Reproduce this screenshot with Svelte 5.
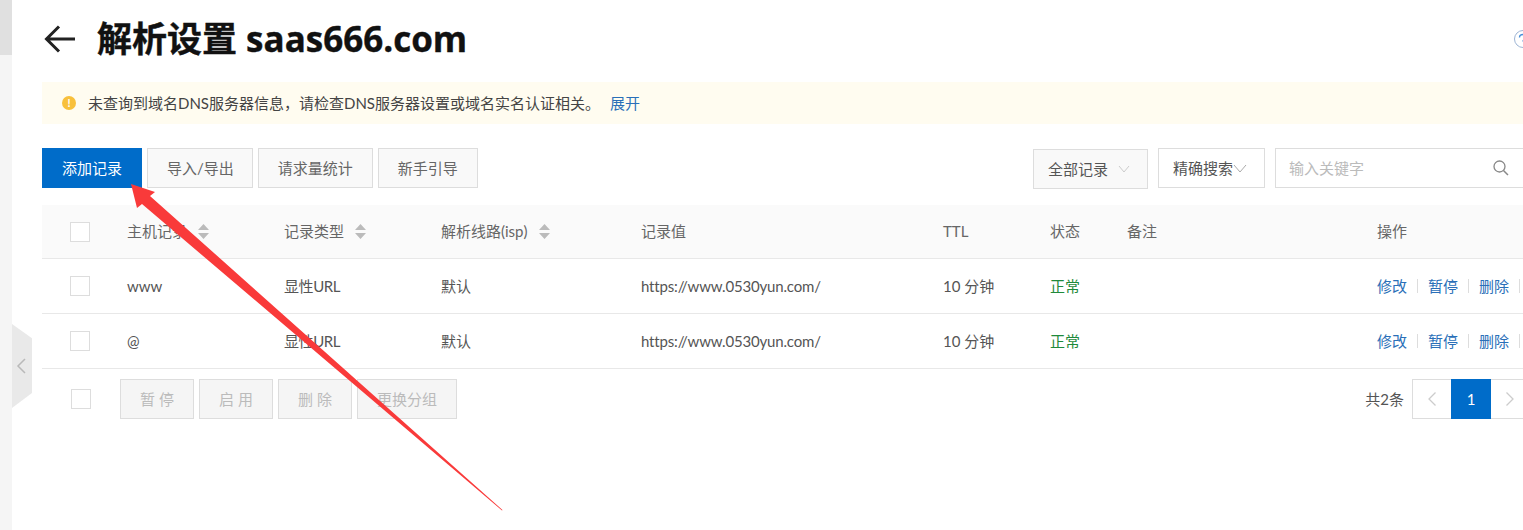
<script>
	const columns = [
		{ label: '主机记录', sort: true },
		{ label: '记录类型', sort: true },
		{ label: '解析线路(isp)', sort: true },
		{ label: '记录值' },
		{ label: 'TTL' },
		{ label: '状态' },
		{ label: '备注' },
		{ label: '操作' }
	]

	const records = [
		{ host: 'www', type: '显性URL', line: '默认', value: 'https://www.0530yun.com/', ttl: '10 分钟', status: '正常' },
		{ host: '@', type: '显性URL', line: '默认', value: 'https://www.0530yun.com/', ttl: '10 分钟', status: '正常' }
	]

	const tools = ['导入/导出', '请求量统计', '新手引导']
	const batch = ['暂 停', '启 用', '删 除', '更换分组']
</script>

<div class="page">
	<aside class="rail"><div class="rail-top"></div></aside>
	<div class="rail-handle">
		<svg width="10" height="16" viewBox="0 0 10 16"><path d="M9 1 2 8l7 7" fill="none" stroke="#b9b9b9" stroke-width="1.5" /></svg>
	</div>

	<main class="main">
		<div class="content">
			<header class="title-row">
				<svg class="back" width="32" height="28" viewBox="0 0 32 28">
					<path d="M15 1.500 2.500 14 15 26.500M3 14h28" fill="none" stroke="#222" stroke-width="3" />
				</svg>
				<h1>解析设置 saas666.com</h1>
				<svg class="help" width="18" height="18" viewBox="0 0 18 18">
					<circle cx="9" cy="9" r="8.500" fill="none" stroke="#9db4d4" />
					<path d="M5.500 7.500C5.500 5.500 7 4.500 9 4.500s3.500 1 3.500 2.800c0 2-3.500 2-3.500 4.200" fill="none" stroke="#4a90d9" stroke-width="1.400" />
				</svg>
			</header>

			<div class="alert">
				<span class="alert-icon">!</span>
				<span class="alert-text">未查询到域名DNS服务器信息，请检查DNS服务器设置或域名实名认证相关。</span>
				<span class="link expand">展开</span>
			</div>

			<div class="toolbar">
				<button class="btn primary">添加记录</button>
				{#each tools as tool}
					<button class="btn">{tool}</button>
				{/each}
				<div class="spacer"></div>
				<div class="select all">
					<span class="lift">全部记录</span>
					<svg width="12" height="8" viewBox="0 0 12 8"><path d="M1 1l5 6 5-6" fill="none" stroke="#ccc" /></svg>
				</div>
				<div class="select exact">
					<span class="lift">精确搜索</span>
					<svg width="14" height="9" viewBox="0 0 14 9"><path d="M1 1l6 7 6-7" fill="none" stroke="#aaa" /></svg>
				</div>
				<div class="search">
					<span class="lift">输入关键字</span>
					<svg width="18" height="18" viewBox="0 0 18 18">
						<circle cx="7.500" cy="7.500" r="5.500" fill="none" stroke="#888" stroke-width="1.300" />
						<path d="M11.500 11.500 16 16" stroke="#888" stroke-width="1.500" />
					</svg>
				</div>
			</div>

			<div class="row head">
				<span class="check"></span>
				{#each columns as col}
					<span class="cell">
						{col.label}
						{#if col.sort}
							<svg class="sort" width="11" height="15" viewBox="0 0 11 15">
								<path d="M5.500 0 11 6H0zM5.500 15 0 9h11z" fill="#bbb" />
							</svg>
						{/if}
					</span>
				{/each}
			</div>
			{#each records as rec}
				<div class="row">
					<span class="check"></span>
					<span class="cell plain">{rec.host}</span>
					<span class="cell type">{rec.type}</span>
					<span class="cell">{rec.line}</span>
					<span class="cell plain url">{rec.value}</span>
					<span class="cell">{rec.ttl}</span>
					<span class="cell ok">{rec.status}</span>
					<span class="cell"></span>
					<span class="cell actions">
						<span class="link">修改</span><i></i><span class="link">暂停</span><i></i><span class="link">删除</span><i></i>
					</span>
				</div>
			{/each}

			<div class="foot">
				<span class="check foot-check"></span>
				{#each batch as label}
					<button class="btn disabled">{label}</button>
				{/each}
				<div class="spacer"></div>
				<span class="total">共2条</span>
				<div class="pager">
					<span class="nav">
						<svg width="10" height="16" viewBox="0 0 10 16"><path d="M8.500 1.500 2 8l6.500 6.500" fill="none" stroke="#ccc" stroke-width="1.300" /></svg>
					</span>
					<span class="current">1</span>
					<span class="nav">
						<svg width="10" height="16" viewBox="0 0 10 16"><path d="M1.500 1.500 8 8l-6.500 6.500" fill="none" stroke="#ccc" stroke-width="1.300" /></svg>
					</span>
				</div>
			</div>
		</div>
	</main>

	<!-- red annotation drawn over the screenshot -->
	<svg class="annotation" width="1523" height="530" viewBox="0 0 1523 530">
		<polygon points="131,184 155,192 150,196 502.500,510 502,510.500 142,204 137,208" fill="#f93a3a" />
	</svg>
</div>

<style>
	:global(body) {
		margin: 0;
		background: #fff;
		overflow: hidden;
	}
	.page {
		position: relative;
		display: flex;
		width: 1523px;
		height: 530px;
		overflow: hidden;
		font-family: Lato, 'Noto Sans CJK SC', sans-serif;
		font-size: 15px;
		color: #555;
	}
	.rail {
		width: 12px;
		flex: none;
		background: #f5f5f5;
	}
	.rail-top {
		height: 55px;
		background: #e0e0e0;
	}
	.rail-handle {
		position: absolute;
		left: 12px;
		top: 324px;
		width: 20px;
		height: 84px;
		background: #e9e9e9;
		clip-path: polygon(0 0, 100% 17%, 100% 82%, 0 100%);
		display: flex;
		align-items: center;
		padding-left: 4px;
		box-sizing: border-box;
	}
	.main {
		flex: 1;
		min-width: 0;
		padding-left: 30px;
		overflow: hidden;
	}
	.content {
		width: 1493px;
	}
	.title-row {
		height: 82px;
		display: flex;
		align-items: center;
		padding-left: 2px;
		box-sizing: border-box;
		padding-bottom: 5px;
	}
	.back {
		flex: none;
		margin-right: 21px;
	}
	h1 {
		margin: 0;
		flex: 1;
		font-family: 'Open Sans', 'Noto Sans CJK SC', sans-serif;
		font-size: 35px;
		font-weight: 700;
		color: #111;
		line-height: 44px;
		-webkit-text-stroke: 0.4px #111;
	}
	.help {
		flex: none;
		margin-right: 3px;
	}
	.alert {
		height: 42px;
		display: flex;
		align-items: center;
		padding-left: 20px;
		background: #fffcf0;
		color: #444;
	}
	.alert-icon {
		width: 14px;
		height: 14px;
		margin-right: 12px;
		border-radius: 50%;
		background: #f8c03c;
		color: #fff;
		font-size: 11px;
		font-weight: 700;
		line-height: 14px;
		text-align: center;
	}
	.alert-text,
	.expand,
	.lift {
		padding-bottom: 2px;
	}
	.expand {
		margin-left: 10px;
	}
	.link {
		color: #2a6fb8;
	}
	.toolbar {
		display: flex;
		align-items: flex-start;
		gap: 5px;
		margin-top: 24px;
		height: 57px;
	}
	.spacer {
		flex: 1;
	}
	.btn {
		height: 40px;
		padding: 0 19px 2px;
		border: 1px solid #ddd;
		background: #f9f9f9;
		color: #666;
		font: inherit;
	}
	.toolbar .btn:nth-child(2) {
		padding-right: 18px;
	}
	.primary {
		width: 100px;
		padding: 0 0 2px;
		border-color: #006cc9;
		background: #006cc9;
		color: #fff;
	}
	.select {
		display: flex;
		align-items: center;
		height: 40px;
		box-sizing: border-box;
		border: 1px solid #ddd;
		color: #555;
	}
	.all {
		width: 115px;
		margin-top: 1px;
		padding-left: 14px;
		gap: 10px;
		background: #f9f9f9;
	}
	.exact {
		width: 107px;
		margin-left: 5px;
		padding-left: 14px;
		background: #fff;
	}
	.search {
		display: flex;
		align-items: center;
		justify-content: space-between;
		width: 260px;
		height: 40px;
		margin-left: 5px;
		padding: 0 24px 0 13px;
		box-sizing: border-box;
		border: 1px solid #ddd;
		color: #bbb;
	}
	.row {
		display: grid;
		grid-template-columns: 85px 157px 157px 200px 302px 107px 77px 250px 1fr;
		align-items: center;
		height: 55px;
		box-sizing: border-box;
		border-bottom: 1px solid #e8e8e8;
	}
	.head {
		height: 54px;
		background: #fafafa;
		color: #666;
	}
	.check {
		display: block;
		width: 20px;
		height: 20px;
		margin-left: 28px;
		box-sizing: border-box;
		border: 1px solid #ddd;
		background: #fff;
	}
	.cell {
		display: flex;
		align-items: center;
		padding-bottom: 2px;
		white-space: nowrap;
	}
	.plain {
		padding-bottom: 0;
	}
	.url {
		letter-spacing: -0.17px;
	}
	.type {
		letter-spacing: -0.4px;
	}
	.sort {
		margin-left: 11px;
		margin-top: 2px;
	}
	.ok {
		color: #1f8a3b;
	}
	.actions i {
		width: 1px;
		height: 14px;
		margin: 2px 10px 0;
		background: #ddd;
	}
	.foot {
		display: flex;
		align-items: center;
		gap: 5px;
		height: 40px;
		margin-top: 10px;
	}
	.foot-check {
		margin-left: 29px;
		margin-right: 24px;
	}
	.disabled {
		width: 74px;
		padding: 0 0 2px;
		background: #f5f5f5;
		color: #bbb;
	}
	.disabled:last-of-type {
		width: 100px;
	}
	.total {
		margin-right: 3px;
		padding-bottom: 2px;
	}
	.pager {
		display: flex;
		height: 40px;
		box-sizing: border-box;
		border: 1px solid #ddd;
		margin-right: 5px;
	}
	.nav {
		display: flex;
		align-items: center;
		justify-content: center;
		width: 38px;
	}
	.current {
		width: 40px;
		margin: -1px 0;
		background: #006cc9;
		color: #fff;
		line-height: 40px;
		text-align: center;
	}
	.annotation {
		position: absolute;
		left: 0;
		top: 0;
		pointer-events: none;
	}
</style>
